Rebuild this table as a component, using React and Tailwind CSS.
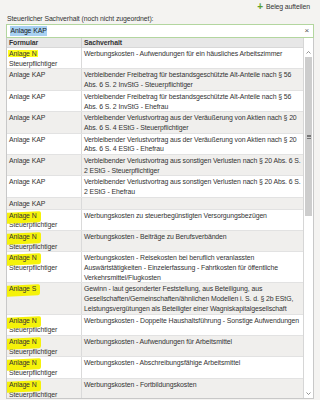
import React from 'react'

const rows = [
  { form: 'Anlage N', sub: 'Steuerpflichtiger', hl: 'neat', text: ['Werbungskosten - Aufwendungen für ein häusliches Arbeitszimmer'] },
  { form: 'Anlage KAP', text: ['Verbleibender Freibetrag für bestandsgeschützte Alt-Anteile nach § 56', 'Abs. 6 S. 2 InvStG - Steuerpflichtiger'] },
  { form: 'Anlage KAP', text: ['Verbleibender Freibetrag für bestandsgeschützte Alt-Anteile nach § 56', 'Abs. 6 S. 2 InvStG - Ehefrau'] },
  { form: 'Anlage KAP', text: ['Verbleibender Verlustvortrag aus der Veräußerung von Aktien nach § 20', 'Abs. 6 S. 4 EStG - Steuerpflichtiger'] },
  { form: 'Anlage KAP', text: ['Verbleibender Verlustvortrag aus der Veräußerung von Aktien nach § 20', 'Abs. 6 S. 4 EStG - Ehefrau'] },
  { form: 'Anlage KAP', text: ['Verbleibender Verlustvortrag aus sonstigen Verlusten nach § 20 Abs. 6 S.', '2 EStG - Steuerpflichtiger'] },
  { form: 'Anlage KAP', text: ['Verbleibender Verlustvortrag aus sonstigen Verlusten nach § 20 Abs. 6 S.', '2 EStG - Ehefrau'] },
  { form: 'Anlage KAP', text: [] },
  { form: 'Anlage N', sub: 'Steuerpflichtiger', hl: 'marker', text: ['Werbungskosten zu steuerbegünstigten Versorgungsbezügen'] },
  { form: 'Anlage N', sub: 'Steuerpflichtiger', hl: 'marker', text: ['Werbungskosten - Beiträge zu Berufsverbänden'] },
  { form: 'Anlage N', sub: 'Steuerpflichtiger', hl: 'marker', text: ['Werbungskosten - Reisekosten bei beruflich veranlassten', 'Auswärtstätigkeiten - Einzelerfassung - Fahrtkosten für öffentliche', 'Verkehrsmittel/Flugkosten'] },
  { form: 'Anlage S', hl: 'marker', text: ['Gewinn - laut gesonderter Feststellung, aus Beteiligung, aus', 'Gesellschaften/Gemeinschaften/ähnlichen Modellen i. S. d. § 2b EStG,', 'Leistungsvergütungen als Beteiligter einer Wagniskapitalgesellschaft'] },
  { form: 'Anlage N', sub: 'Steuerpflichtiger', hl: 'marker', text: ['Werbungskosten - Doppelte Haushaltsführung - Sonstige Aufwendungen'] },
  { form: 'Anlage N', sub: 'Steuerpflichtiger', hl: 'marker', text: ['Werbungskosten - Aufwendungen für Arbeitsmittel'] },
  { form: 'Anlage N', sub: 'Steuerpflichtiger', hl: 'marker', text: ['Werbungskosten - Abschreibungsfähige Arbeitsmittel'] },
  { form: 'Anlage N', sub: 'Steuerpflichtiger', hl: 'marker', text: ['Werbungskosten - Fortbildungskosten'] },
]

const Formular = ({ row }) => {
  if (row.hl === 'neat') {
    return <span className="bg-[#ffff1a] px-[1px] -ml-[1px]">{row.form}</span>
  }
  if (row.hl === 'marker') {
    return (
      <span className="relative inline-block">
        <span className="absolute -left-[4px] -right-[4px] top-[1px] bottom-[-2px] bg-[#f5f20a] -skew-y-3 rounded-[2px]" />
        <span className="relative">{row.form}</span>
      </span>
    )
  }
  return <span>{row.form}</span>
}

const App = () => {
  return (
    <div className="w-[320px] h-[400px] overflow-hidden bg-[#f4f3f1] text-[#333] text-[6.9px] leading-[9.7px] tracking-[-0.1px]" style={{ fontFamily: '"Liberation Sans", Arial, sans-serif' }}>
      <div className="flex justify-end items-center gap-[3px] pr-[10px] pt-[2px] h-[11px]">
        <span className="text-[#5aa02c] font-bold text-[10px] leading-[8px]">+</span>
        <span>Beleg aufteilen</span>
      </div>
      <div className="pl-[7px] mt-[3px] h-[10px]">Steuerlicher Sachverhalt (noch nicht zugeordnet):</div>
      <div className="mx-[6px] h-[14px] border border-[#b3d69f] bg-white flex items-center pl-[3px] pr-[4px]">
        <span className="bg-[#a8d1f2] px-[0.5px] text-[#1a1a1a]">Anlage KAP</span>
        <span className="ml-auto text-[8px] text-[#555]">×</span>
      </div>
      <div className="mx-[6px] h-[361px] overflow-hidden border-l border-r border-b border-[#c8c8c8] bg-white flex">
        <div className="flex-1 min-w-0">
          <div className="grid grid-cols-[75px_minmax(0,1fr)] bg-[#e7e7e7] font-bold h-[10px] border-b border-[#d8d8d8]">
            <div className="pl-[2px] border-r border-[#d0d0d0]">Formular</div>
            <div className="pl-[2px]">Sachverhalt</div>
          </div>
          {rows.map((row, i) => (
            <div key={i} className={`grid grid-cols-[75px_minmax(0,1fr)] border-b border-[#e2e2e2] ${i % 2 ? 'bg-[#f0efed]' : 'bg-white'}`}>
              <div className="pl-[2px] pt-[1px] border-r border-[#dadada]">
                <div className="whitespace-nowrap"><Formular row={row} /></div>
                {row.sub && <div>{row.sub}</div>}
              </div>
              <div className="pl-[2px] pt-[1px] whitespace-nowrap overflow-hidden">
                {row.text.map((t, j) => <div key={j}>{t}</div>)}
              </div>
            </div>
          ))}
        </div>
        <div className="w-[10px] flex flex-col border-l border-[#d6d6d6] bg-white">
          <div className="h-[10px] bg-white" />
          <div className="h-[9px] flex items-center justify-center text-[#888]">
            <svg width="5" height="3" viewBox="0 0 5 3"><path d="M0.5 2.5 L2.5 0.5 L4.5 2.5" fill="none" stroke="#777" strokeWidth="0.8" /></svg>
          </div>
          <div className="h-[159px] mx-[1px] bg-[#cdcdcd] flex items-center justify-center">
            <div className="flex flex-col gap-[1px]">
              <div className="w-[4px] h-[0.5px] bg-[#777]" />
              <div className="w-[4px] h-[0.5px] bg-[#777]" />
              <div className="w-[4px] h-[0.5px] bg-[#777]" />
            </div>
          </div>
          <div className="flex-1" />
          <div className="h-[9px] flex items-center justify-center">
            <svg width="5" height="3" viewBox="0 0 5 3"><path d="M0.5 0.5 L2.5 2.5 L4.5 0.5" fill="none" stroke="#777" strokeWidth="0.8" /></svg>
          </div>
        </div>
      </div>
    </div>
  )
}

export default App
